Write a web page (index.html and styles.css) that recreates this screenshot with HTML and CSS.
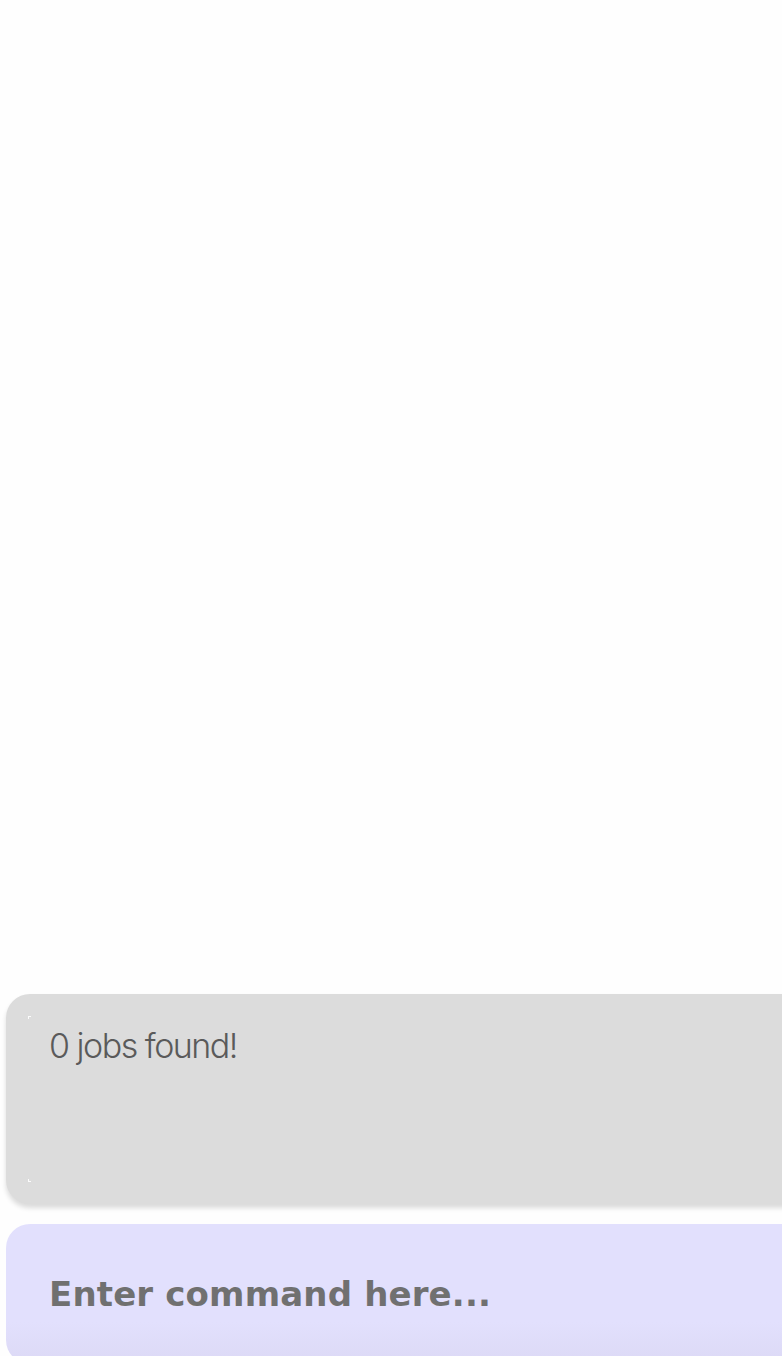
FILE: index.html
```html
<!DOCTYPE html>
<html lang="en">
<head>
<meta charset="utf-8">
<title>Jobs</title>
<link rel="stylesheet" href="styles.css">
</head>
<body>
<main class="page">
  <section class="results">
    <span class="mark mark-top"></span>
    <p class="results-text">0 jobs found!</p>
    <span class="mark mark-bottom"></span>
  </section>
  <div class="command">
    <input class="command-input" type="text" placeholder="Enter command here...">
  </div>
</main>
</body>
</html>
```
FILE: styles.css
```css
html, body {
  margin: 0;
  padding: 0;
  height: 1356px;
  overflow: hidden;
  background: #fefefe;
}

.page {
  display: flex;
  flex-direction: column;
  justify-content: flex-end;
  gap: 20px;
  height: 1364px;
  padding: 0 0 0 6px;
  box-sizing: border-box;
  width: 900px;
}

.results {
  position: relative;
  height: 210px;
  background: #dcdcdc;
  border-radius: 24px;
  box-shadow: 0 4px 5px rgba(0, 0, 0, 0.14);
  padding: 31px 43px;
  box-sizing: border-box;
}

.results-text {
  margin: 0;
  font-family: Inter, "Noto Sans", sans-serif;
  font-weight: 300;
  font-size: 34px;
  letter-spacing: -1.5px;
  color: #5a5a5a;
}

.mark {
  position: absolute;
  left: 22px;
  width: 2px;
  height: 2px;
}

.mark-top {
  top: 22px;
  border-top: 1px solid rgba(255,255,255,0.9);
  border-left: 1px solid rgba(255,255,255,0.9);
}

.mark-bottom {
  bottom: 22px;
  border-bottom: 1px solid rgba(255,255,255,0.9);
  border-left: 1px solid rgba(255,255,255,0.9);
}

.command {
  height: 140px;
  border-radius: 24px;
  background: linear-gradient(#e2e0fd 0%, #e2e0fd 70%, #dcd9f5 100%);
  display: flex;
  align-items: center;
  padding: 0 43px;
}

.command-input {
  border: none;
  outline: none;
  background: transparent;
  width: 100%;
  padding: 0;
  font-family: "DejaVu Sans", sans-serif;
  font-weight: bold;
  font-size: 34px;
  letter-spacing: 0.15px;
  color: #707070;
}

.command-input::placeholder {
  color: #707070;
  opacity: 1;
}
```
